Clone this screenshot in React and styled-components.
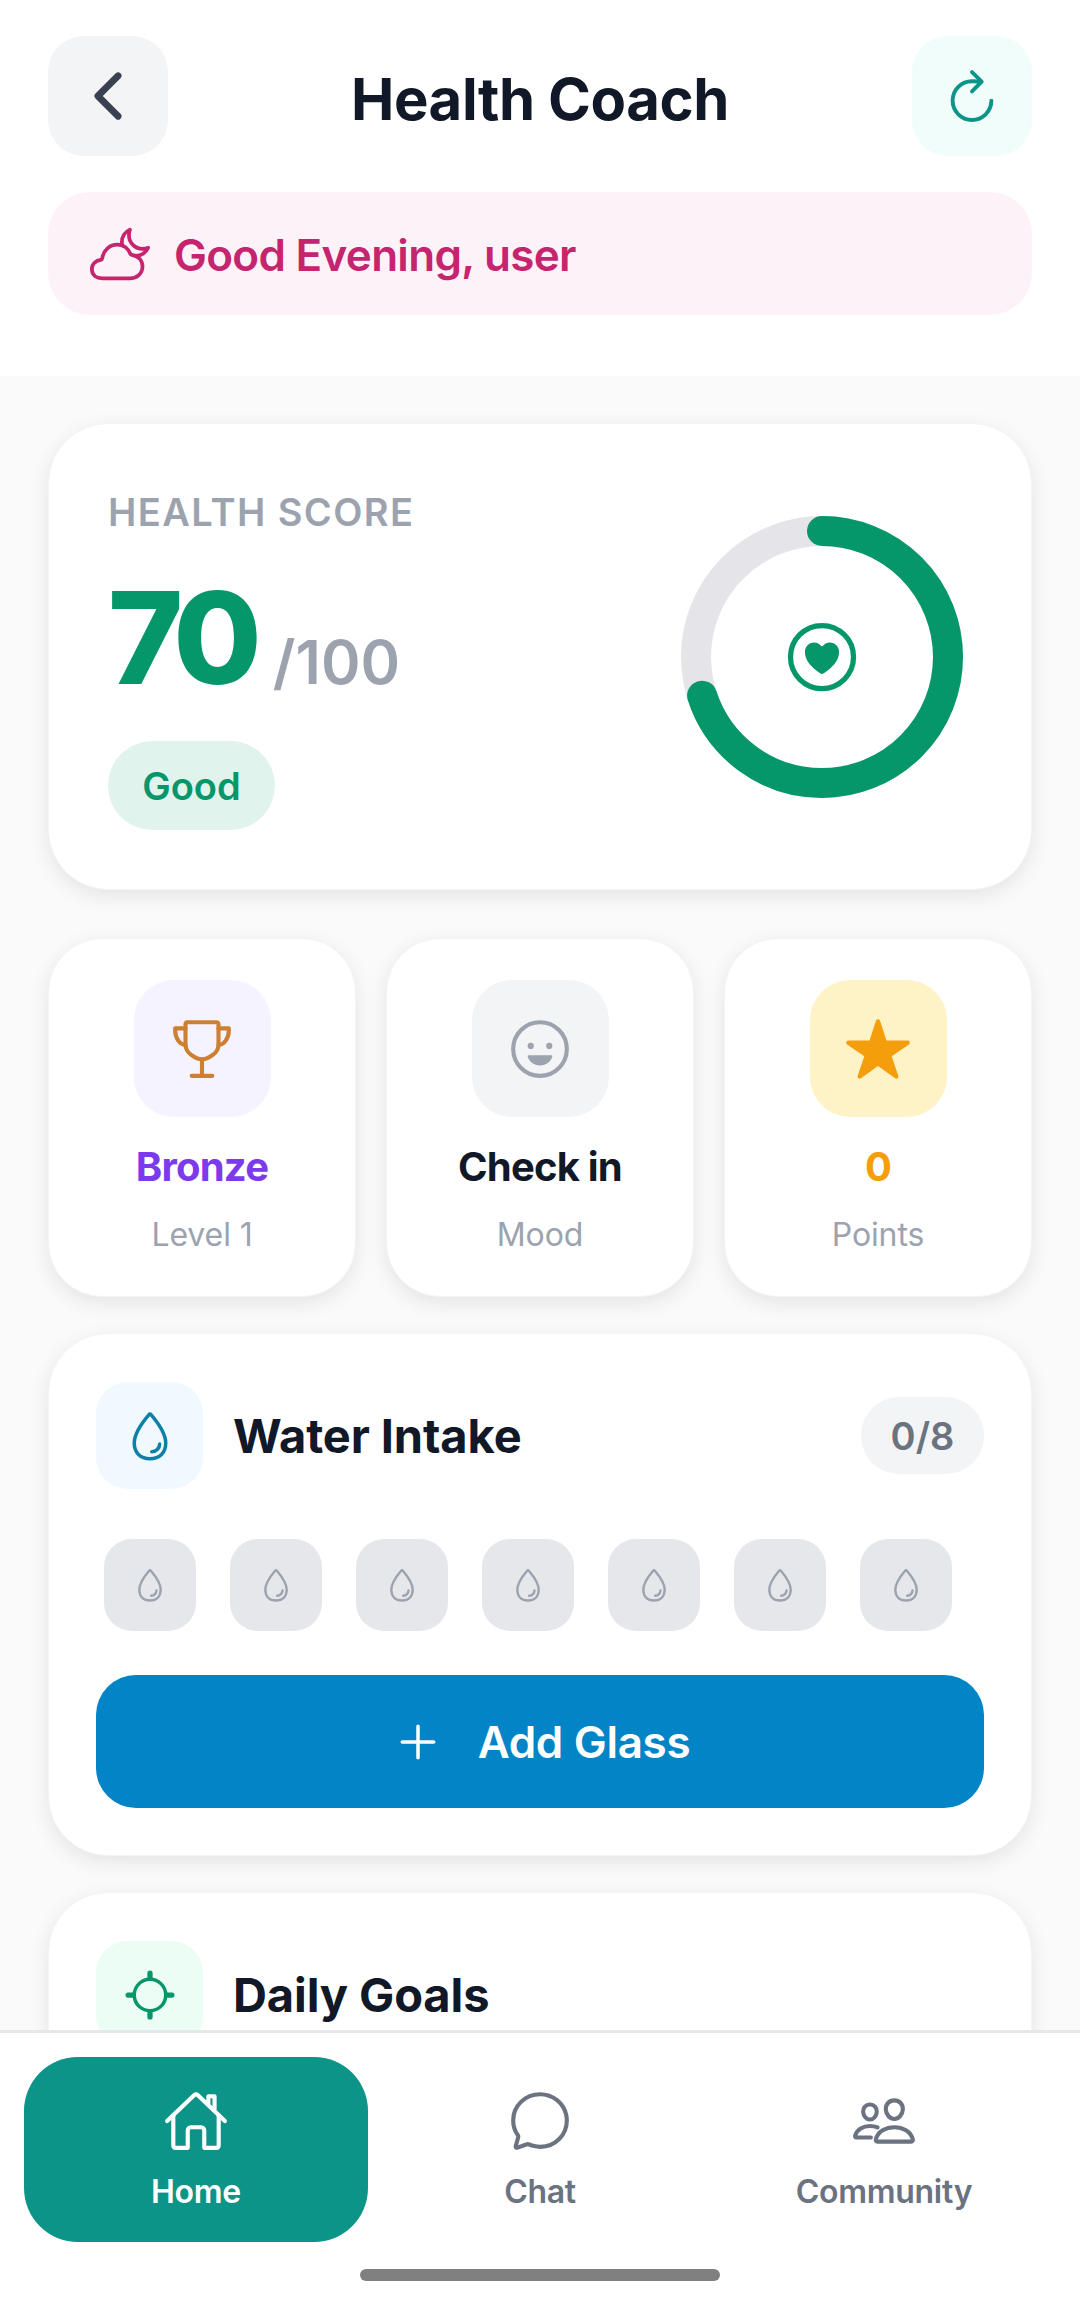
import React from 'react';
import styled, { createGlobalStyle } from 'styled-components';
import {
  IoChevronBackOutline, IoRefreshOutline, IoCloudyNightOutline, IoHeartCircleOutline,
  IoTrophyOutline, IoHappyOutline, IoStar, IoWaterOutline, IoAddOutline, IoLocateOutline,
  IoHomeOutline, IoChatbubbleOutline, IoPeopleOutline,
} from 'react-icons/io5';

const Global = createGlobalStyle`
  html, body { margin: 0; padding: 0; background: #fff; }
  * { box-sizing: border-box; }
  body { font-family: Inter, "Noto Sans", sans-serif; }
`;

const Screen = styled.div`
  width: 1080px; height: 2302px; display: flex; flex-direction: column; overflow: hidden; background: #fafafa;
`;
const Header = styled.header`
  background: #fff; padding: 36px 48px 61px; display: flex; flex-direction: column; gap: 36px;
`;
const TopBar = styled.div`display: flex; align-items: center; justify-content: space-between;`;
const IconButton = styled.button`
  width: 120px; height: 120px; border: 0; border-radius: 36px; padding: 0;
  display: flex; align-items: center; justify-content: center;
  background: ${p => p.$bg}; color: ${p => p.$fg};
`;
const Title = styled.h1`margin: 0; padding-top: 6px; font-size: 58px; line-height: 70px; font-weight: 700; color: #111827; letter-spacing: -0.4px;`;
const Greeting = styled.div`
  height: 123px; border-radius: 42px; background: #fdf2f8; color: #c5256f;
  display: flex; align-items: center; gap: 24px; padding: 0 42px;
`;
const GreetingText = styled.span`padding-top: 2px; font-size: 44px; font-weight: 600; letter-spacing: -0.7px;`;

const Scroll = styled.main`
  flex: 1; min-height: 0; overflow: hidden; padding: 47px 48px 0; display: flex; flex-direction: column;
`;
const Card = styled.section`
  background: #fff; border-radius: 60px; border: 1px solid #f3f4f6;
  box-shadow: 0 6px 20px rgba(0,0,0,.09);
`;
const ScoreCard = styled(Card)`
  height: 467px; flex: none; padding: 0 59px; display: flex; align-items: center; justify-content: space-between;
`;
const ScoreInfo = styled.div`display: flex; flex-direction: column; align-items: flex-start; padding-top: 6px;`;
const ScoreLabel = styled.div`font-size: 38px; line-height: 46px; font-weight: 600; color: #9ca3af; letter-spacing: 1.4px;`;
const ScoreRow = styled.div`display: flex; align-items: baseline; gap: 19px; margin-top: 28px;`;
const ScoreValue = styled.span`font-size: 128px; line-height: 150px; font-weight: 800; color: #059669; letter-spacing: -8px;`;
const ScoreMax = styled.span`font-size: 60px; font-weight: 600; color: #9ca3af;`;
const Badge = styled.div`
  margin-top: 28px; width: 167px; height: 89px; border-radius: 45px; background: #e1f3ed; color: #059669;
  display: flex; align-items: center; justify-content: center; font-size: 38px; font-weight: 600;
`;
const Ring = styled.div`
  position: relative; width: 282px; height: 282px; margin-right: 9px; color: #059669;
  display: flex; align-items: center; justify-content: center;
`;
const RingSvg = styled.svg`position: absolute; inset: 0;`;

const Stats = styled.div`display: grid; grid-template-columns: repeat(3, 308px); gap: 30px; margin-top: 48px; flex: none;`;
const StatCard = styled(Card)`
  height: 359px; padding-top: 41px; border-radius: 54px; display: flex; flex-direction: column; align-items: center;
`;
const StatIcon = styled.div`
  width: 137px; height: 137px; border-radius: 40px; background: ${p => p.$bg}; color: ${p => p.$fg};
  display: flex; align-items: center; justify-content: center;
`;
const StatValue = styled.div`margin-top: 26px; font-size: 40px; line-height: 48px; font-weight: 700; color: ${p => p.$c}; letter-spacing: -0.8px;`;
const StatLabel = styled.div`margin-top: 24px; font-size: 32px; line-height: 40px; color: #9ca3af; letter-spacing: -0.1px;`;

const SectionCard = styled(Card)`flex: none; margin-top: 36px; padding: 48px 47px 47px;`;
const SectionHead = styled.div`display: flex; align-items: center; gap: 30px;`;
const SectionIcon = styled.div`
  width: 107px; height: 107px; border-radius: 32px; background: ${p => p.$bg}; color: ${p => p.$fg};
  display: flex; align-items: center; justify-content: center; flex: none;
`;
const SectionTitle = styled.h2`flex: 1; margin: 0; font-size: 47px; font-weight: 700; color: #111827; letter-spacing: -0.1px;`;
const Count = styled.div`
  width: 123px; height: 77px; border-radius: 38px; background: #f3f4f6; color: #6b7280;
  display: flex; align-items: center; justify-content: center; font-size: 38px; font-weight: 600;
`;
const Glasses = styled.div`display: flex; gap: 34px; padding: 0 8px; margin-top: 50px;`;
const Glass = styled.div`
  width: 92px; height: 92px; border-radius: 28px; background: #e5e7eb; color: #9ca3af;
  display: flex; align-items: center; justify-content: center;
`;
const AddButton = styled.button`
  width: 100%; height: 133px; margin-top: 44px; border: 0; border-radius: 40px; background: #0284c7; color: #fff;
  display: flex; align-items: center; justify-content: center; gap: 32px;
  font-family: inherit; font-size: 44px; font-weight: 600; letter-spacing: -0.3px;
`;

const Nav = styled.nav`
  flex: none; height: 272px; background: #fff; border-top: 3px solid #e5e7eb; position: relative;
  display: grid; grid-template-columns: repeat(3, 344px); justify-content: space-between; padding: 24px 24px 0;
  align-items: start;
`;
const NavItem = styled.div`
  height: 185px; border-radius: 54px; background: ${p => (p.$active ? '#0d9488' : 'transparent')};
  color: ${p => (p.$active ? '#fff' : '#6b7280')};
  display: flex; flex-direction: column; align-items: center; padding-top: 31px;
`;
const NavLabel = styled.span`margin-top: 18px; font-size: 32px; line-height: 40px; font-weight: 600; letter-spacing: -0.3px;`;
const HomeBar = styled.div`
  position: absolute; left: 360px; bottom: 21px; width: 360px; height: 12px; border-radius: 6px; background: #808080;
`;

const stats = [
  { icon: <IoTrophyOutline size={66} />, bg: '#f5f3ff', fg: '#cd7f32', value: 'Bronze', color: '#7c3aed', label: 'Level 1' },
  { icon: <IoHappyOutline size={66} />, bg: '#f3f4f6', fg: '#9ca3af', value: 'Check in', color: '#111827', label: 'Mood' },
  { icon: <IoStar size={68} />, bg: '#fef3c7', fg: '#f59e0b', value: '0', color: '#f59e0b', label: 'Points' },
];
const nav = [
  { icon: IoHomeOutline, label: 'Home', active: true },
  { icon: IoChatbubbleOutline, label: 'Chat' },
  { icon: IoPeopleOutline, label: 'Community' },
];
const R = 126;
const C = 2 * Math.PI * R;

export default function App() {
  return (
    <Screen>
      <Global />
      <Header>
        <TopBar>
          <IconButton $bg="#f3f4f6" $fg="#374151"><IoChevronBackOutline size={72} /></IconButton>
          <Title>Health Coach</Title>
          <IconButton $bg="#f0fdfa" $fg="#0d9488"><IoRefreshOutline size={62} /></IconButton>
        </TopBar>
        <Greeting>
          <IoCloudyNightOutline size={60} />
          <GreetingText>Good Evening, user</GreetingText>
        </Greeting>
      </Header>
      <Scroll>
        <ScoreCard>
          <ScoreInfo>
            <ScoreLabel>HEALTH SCORE</ScoreLabel>
            <ScoreRow>
              <ScoreValue>70</ScoreValue>
              <ScoreMax>/100</ScoreMax>
            </ScoreRow>
            <Badge>Good</Badge>
          </ScoreInfo>
          <Ring>
            <RingSvg width="282" height="282" viewBox="0 0 282 282">
              <circle cx="141" cy="141" r={R} fill="none" stroke="#e5e5e9" strokeWidth="30" />
              <circle cx="141" cy="141" r={R} fill="none" stroke="#059669" strokeWidth="30" strokeLinecap="round"
                strokeDasharray={`${C * 0.7} ${C}`} transform="rotate(-90 141 141)" />
            </RingSvg>
            <IoHeartCircleOutline size={84} />
          </Ring>
        </ScoreCard>
        <Stats>
          {stats.map(s => (
            <StatCard key={s.label}>
              <StatIcon $bg={s.bg} $fg={s.fg}>{s.icon}</StatIcon>
              <StatValue $c={s.color}>{s.value}</StatValue>
              <StatLabel>{s.label}</StatLabel>
            </StatCard>
          ))}
        </Stats>
        <SectionCard>
          <SectionHead>
            <SectionIcon $bg="#f0f9ff" $fg="#0e7fa5"><IoWaterOutline size={56} /></SectionIcon>
            <SectionTitle>Water Intake</SectionTitle>
            <Count>0/8</Count>
          </SectionHead>
          <Glasses>
            {Array.from({ length: 7 }, (_, i) => (
              <Glass key={i}><IoWaterOutline size={38} /></Glass>
            ))}
          </Glasses>
          <AddButton><IoAddOutline size={56} />Add Glass</AddButton>
        </SectionCard>
        <SectionCard>
          <SectionHead>
            <SectionIcon $bg="#ecfdf5" $fg="#059669"><IoLocateOutline size={56} /></SectionIcon>
            <SectionTitle>Daily Goals</SectionTitle>
          </SectionHead>
        </SectionCard>
      </Scroll>
      <Nav>
        {nav.map(({ icon: Icon, label, active }) => (
          <NavItem key={label} $active={active}>
            <Icon size={66} />
            <NavLabel>{label}</NavLabel>
          </NavItem>
        ))}
        <HomeBar />
      </Nav>
    </Screen>
  );
}
